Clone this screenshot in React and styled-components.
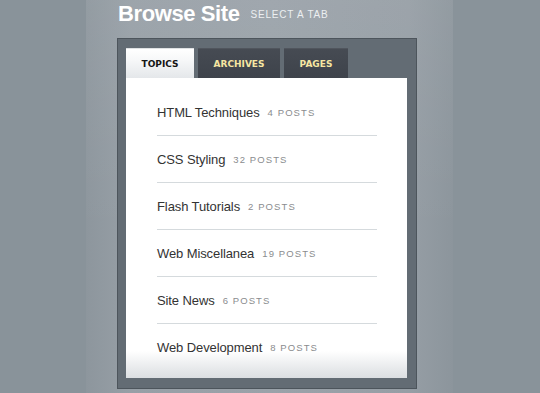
import React from "react";
import styled, { createGlobalStyle } from "styled-components";

const Global = createGlobalStyle`
  html, body { margin: 0; padding: 0; }
  body {
    background: #89939a;
    font-family: "Liberation Sans", Arial, sans-serif;
  }
`;

const Page = styled.div`
  width: 540px;
  height: 393px;
  overflow: hidden;
  display: flex;
`;

const Column = styled.div`
  margin-left: 86px;
  width: 367px;
  height: 393px;
  padding-left: 31px;
  box-sizing: border-box;
  background:
    linear-gradient(to bottom, rgba(255,255,255,0.06), rgba(255,255,255,0) 60%),
    linear-gradient(to right, #8d969d 0%, #979fa6 12%, #9aa2a9 50%, #969ea5 88%, #8c959c 100%);
`;

const Header = styled.div`
  height: 38px;
  box-sizing: border-box;
  padding: 3px 0 0 1px;
  display: flex;
  align-items: flex-start;
`;

const Title = styled.h1`
  margin: 0;
  font-family: "Liberation Sans", Arial, sans-serif;
  font-weight: bold;
  font-size: 22px;
  line-height: 22px;
  letter-spacing: -0.4px;
  color: #ffffff;
`;

const Subtitle = styled.span`
  margin: 7px 0 0 11px;
  font-family: "Liberation Sans", Arial, sans-serif;
  font-size: 10px;
  line-height: 10px;
  letter-spacing: 0.8px;
  color: #eceff1;
`;

const Box = styled.div`
  width: 300px;
  height: 351px;
  box-sizing: border-box;
  border: 1px solid #4d555c;
  background: #636c74;
  padding: 9px 8px 10px 8px;
  display: flex;
  flex-direction: column;
`;

const TabBar = styled.div`
  display: flex;
  gap: 4px;
  height: 30px;
`;

const Tab = styled.div`
  width: ${(p) => p.$w}px;
  height: 30px;
  box-sizing: border-box;
  display: flex;
  align-items: center;
  justify-content: center;
  font-family: "DejaVu Sans", Verdana, sans-serif;
  font-weight: bold;
  font-size: 9px;
  padding-top: 1px;
  color: ${(p) => (p.$active ? "#151515" : "#f6e6a2")};
  background: ${(p) =>
    p.$active
      ? "linear-gradient(to bottom, #ffffff 0%, #f6f7f8 40%, #e4e7ea 100%)"
      : "linear-gradient(to bottom, #464b53 0%, #41464e 60%, #3e434b 100%)"};
  border-top: 1px solid ${(p) => (p.$active ? "#dfe2e4" : "#50555d")};
`;

const Panel = styled.div`
  width: 281px;
  height: 300px;
  box-sizing: border-box;
  padding-top: 11px;
  background: linear-gradient(to bottom, #ffffff 0%, #ffffff 91%, #e7e9eb 97%, #dcdfe2 100%);
`;

const List = styled.ul`
  list-style: none;
  margin: 0 30px 0 31px;
  padding: 0;
`;

const Row = styled.li`
  height: 46px;
  display: flex;
  align-items: center;
  border-bottom: 1px solid ${(p) => (p.$last ? "transparent" : "#d5dadd")};
`;

const Name = styled.span`
  font-family: "Liberation Sans", Arial, sans-serif;
  font-size: 13px;
  letter-spacing: -0.1px;
  color: #333333;
`;

const Count = styled.span`
  margin-left: 8px;
  margin-top: 1px;
  font-family: "Liberation Sans", Arial, sans-serif;
  font-size: 9.5px;
  letter-spacing: 1.1px;
  color: #8a8c8e;
`;

const topics = [
  ["HTML Techniques", 4],
  ["CSS Styling", 32],
  ["Flash Tutorials", 2],
  ["Web Miscellanea", 19],
  ["Site News", 6],
  ["Web Development", 8],
];

export default function App() {
  return (
    <>
      <Global />
      <Page>
        <Column>
          <Header>
            <Title>Browse Site</Title>
            <Subtitle>SELECT A TAB</Subtitle>
          </Header>
          <Box>
            <TabBar>
              <Tab $active $w={68}>TOPICS</Tab>
              <Tab $w={82}>ARCHIVES</Tab>
              <Tab $w={64}>PAGES</Tab>
            </TabBar>
            <Panel>
              <List>
                {topics.map(([name, n], i) => (
                  <Row key={name} $last={i === topics.length - 1}>
                    <Name>{name}</Name>
                    <Count>{n} POSTS</Count>
                  </Row>
                ))}
              </List>
            </Panel>
          </Box>
        </Column>
      </Page>
    </>
  );
}
